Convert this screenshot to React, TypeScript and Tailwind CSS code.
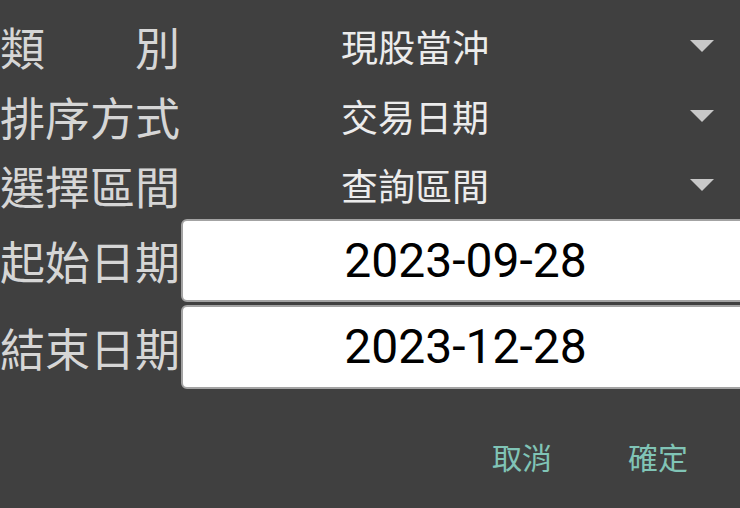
import { ReactNode } from "react"

const cjk = { fontFamily: '"Noto Sans CJK TC", "Noto Sans CJK SC", sans-serif' }

const Caret = () => (
    <svg width="24" height="12" viewBox="0 0 24 12" className="shrink-0">
        <polygon points="0,0 24,0 12,12" fill="#c8c8c8" />
    </svg>
)

const Label = ({ children }: { children: ReactNode }) => (
    <div className="w-[180px] shrink-0 text-[45px] leading-none text-[#d6d6d6]">{children}</div>
)

const SelectRow = ({ label, value, h }: { label: ReactNode, value: string, h: string }) => (
    <div className={`flex items-center ${h}`}>
        <Label>{label}</Label>
        <div className="flex flex-1 items-center pl-[161px] pr-[26px]">
            <span className="text-[37px] leading-none text-[#ececec]">{value}</span>
            <div className="ml-auto">
                <Caret />
            </div>
        </div>
    </div>
)

const DateRow = ({ label, value, h }: { label: string, value: string, h: string }) => (
    <div className={`flex items-center ${h}`}>
        <Label>{label}</Label>
        <div className="ml-[1px] flex h-full w-[569px] shrink-0 items-center justify-center rounded-[6px] border-2 border-[#a3a3a3] bg-white">
            <span className="text-[48px] leading-none text-black" style={{ fontFamily: "Roboto, sans-serif" }}>{value}</span>
        </div>
    </div>
)

export default function App() {
    return (
        <div className="relative h-[508px] w-[740px] overflow-hidden bg-[#404040] pt-[11px]" style={cjk}>
            <SelectRow
                h="h-[70px]"
                label={<div className="flex justify-between"><span>類</span><span>別</span></div>}
                value="現股當沖" />
            <SelectRow h="h-[70px]" label="排序方式" value="交易日期" />
            <SelectRow h="h-[68px]" label="選擇區間" value="查詢區間" />
            <DateRow h="h-[83px]" label="起始日期" value="2023-09-28" />
            <div className="h-[3px]" />
            <DateRow h="h-[84px]" label="結束日期" value="2023-12-28" />
            <div className="mt-[52px] flex justify-end gap-[76px] pr-[52px] text-[30px] leading-none text-[#80c4b6]">
                <span>取消</span>
                <span>確定</span>
            </div>
        </div>
    )
}
